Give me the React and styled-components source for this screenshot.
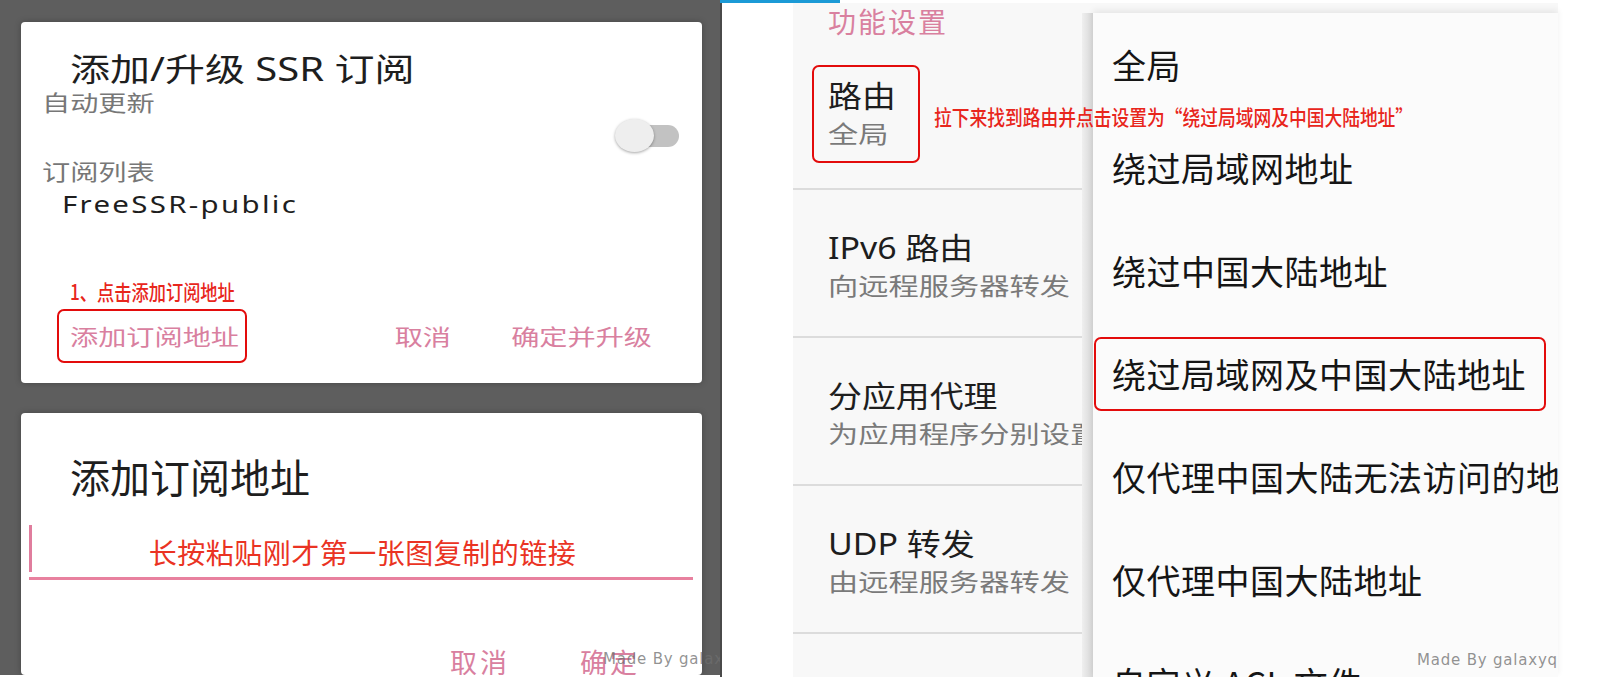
import styled, { createGlobalStyle } from 'styled-components'

const GlobalStyle = createGlobalStyle`
    html, body {
        margin:0;
        padding:0;
        background:#fff;
    }
    body {
        font-family:"Noto Sans", "Noto Sans CJK SC", sans-serif;
    }
`

const PINK = '#d9809f'
const RED = '#e8261c'

const Page = styled.div`
    display:flex;
    align-items:flex-start;
    width:1601px;
    height:684px;
    overflow:hidden;
    background:#fff;
`

/* ---------- left: the two dialogs ---------- */

const LeftPane = styled.div`
    position:relative;
    flex:none;
    width:720px;
    height:675px;
    box-sizing:border-box;
    padding:22px 18px 0 21px;
    background:#5e5e5e;
    display:flex;
    flex-direction:column;
    gap:30px;
    overflow:hidden;
`

const Card = styled.div`
    background:#fff;
    border-radius:4px;
    display:flex;
    flex-direction:column;
    box-shadow:0 0 6px rgba(0,0,0,.25);
    ${p => p.$grow ? 'flex:1;' : `flex:none; height:${p.$h}px;`}
`

// the first dialog was captured stretched sideways
const Wide = styled.div`
    transform:scaleX(${p => p.$sx || 1.28});
    transform-origin:${p => p.$right ? 'right' : 'left'} center;
    white-space:nowrap;
`

const DialogTitle = styled(Wide)`
    margin:27px 0 0 49px;
    font-size:32px;
    line-height:40px;
    color:#1e1e1e;
`

const FieldLabel = styled(Wide)`
    margin-left:21px;
    font-size:22px;
    line-height:26px;
    color:#777;
`

const FieldValue = styled(Wide)`
    margin:5px 0 0 41px;
    font-size:23px;
    line-height:30px;
    letter-spacing:1.8px;
    color:#1e1e1e;
`

const ToggleRow = styled.div`
    display:flex;
    justify-content:flex-end;
    padding-right:23px;
    margin:4px 0 5px;
`

const Track = styled.div`
    position:relative;
    width:62px;
    height:34px;
    &::before {
        content:"";
        position:absolute;
        left:2px;
        right:0;
        top:6px;
        height:22px;
        border-radius:11px;
        background:#c2c2c2;
    }
`

const Thumb = styled.div`
    position:absolute;
    left:-2px;
    top:0;
    width:39px;
    height:33px;
    border-radius:50%;
    background:#eeeeee;
    box-shadow:0 1px 3px rgba(0,0,0,.35);
`

const Spacer = styled.div`
    flex:1;
`

const Note = styled.div`
    font-family:"Noto Sans CJK SC", sans-serif;
    font-size:21px;
    font-weight:500;
    line-height:24px;
    color:${RED};
    white-space:nowrap;
    transform:scaleX(${p => p.$sx || .82});
    transform-origin:left center;
`

const NoteLine = styled(Note)`
    margin-left:49px;
`

const ButtonRow = styled.div`
    display:flex;
    align-items:center;
    margin:6px 0 20px;
    padding:0 50px 0 36px;
`

const Ring = styled.div`
    box-sizing:border-box;
    border:2.5px solid #e30c0c;
    border-radius:7px;
    ${p => p.$w ? `width:${p.$w}px;` : ''}
    ${p => p.$h ? `height:${p.$h}px;` : ''}
    display:flex;
    flex-direction:column;
    justify-content:center;
`

const PinkButton = styled(Wide)`
    font-size:22px;
    line-height:30px;
    color:${PINK};
`

const RightButtons = styled.div`
    margin-left:auto;
    display:flex;
    gap:91px;
`

const BigTitle = styled.div`
    margin:41px 0 0 49px;
    font-size:40px;
    line-height:48px;
    color:#1e1e1e;
    white-space:nowrap;
`

const Field = styled.div`
    display:flex;
    margin:23px 9px 0 8px;
    height:55px;
    box-sizing:border-box;
    border-bottom:3px solid #e8819f;
`

const Caret = styled.div`
    flex:none;
    width:3px;
    height:47px;
    background:#e07d9d;
`

const Hint = styled.div`
    flex:1;
    text-align:center;
    font-family:"Noto Sans CJK SC", sans-serif;
    font-size:28px;
    line-height:54px;
    letter-spacing:.5px;
    color:#ea3323;
    white-space:nowrap;
`

const DialogActions = styled.div`
    display:flex;
    justify-content:flex-end;
    gap:70px;
    margin-top:auto;
    padding:0 62px 0 0;
    height:30px;
    overflow:visible;
`

const Action = styled.div`
    font-size:27px;
    line-height:36px;
    letter-spacing:3px;
    color:${PINK};
    white-space:nowrap;
`

const Watermark = styled.div`
    position:absolute;
    left:${p => p.$x}px;
    top:${p => p.$y}px;
    font-family:"DejaVu Sans", sans-serif;
    font-size:15px;
    letter-spacing:.8px;
    color:rgba(110,110,110,.75);
    white-space:nowrap;
`

/* ---------- right: settings list with popup ---------- */

const RightPane = styled.div`
    position:relative;
    flex:none;
    width:881px;
    height:677px;
    display:flex;
    flex-direction:column;
    overflow:hidden;
`

const TopStrip = styled.div`
    flex:none;
    height:3px;
    background:#fff;
    &::before {
        content:"";
        display:block;
        width:120px;
        height:3px;
        background:#1b9ad6;
    }
`

const Body = styled.div`
    flex:1;
    display:flex;
    min-height:0;
`

const Gutter = styled.div`
    flex:none;
    width:71px;
    border-left:2px solid #4a4a4a;
    background:#fff;
`

const Sheet = styled.div`
    flex:none;
    width:765px;
    display:flex;
    background:#f8f8f8;
`

const List = styled.div`
    flex:none;
    width:289px;
    overflow:hidden;
    display:flex;
    flex-direction:column;
`

const SectionHead = styled.div`
    padding-left:35px;
    font-size:28px;
    line-height:38px;
    letter-spacing:2px;
    color:${PINK};
    white-space:nowrap;
`

const Row = styled.div`
    flex:none;
    box-sizing:border-box;
    height:${p => p.$h || 148}px;
    padding:${p => p.$pad || '39px 0 0 35px'};
    border-bottom:2px solid #dcdcdc;
`

const RowTitle = styled.div`
    font-size:30px;
    line-height:38px;
    color:#1e1e1e;
    white-space:nowrap;
    transform:scaleX(1.13);
    transform-origin:left center;
`

const RowSub = styled.div`
    font-size:24px;
    line-height:38px;
    color:#7a7a7a;
    white-space:nowrap;
    transform:scaleX(1.26);
    transform-origin:left center;
`

const PopupColumn = styled.div`
    flex:none;
    width:476px;
    display:flex;
    padding-top:10px;
`

const PopupShade = styled.div`
    flex:none;
    width:11px;
    background:linear-gradient(to right, #efefef, #d6d6d6);
`

const Popup = styled.div`
    flex:1;
    background:#fbfbfb;
    overflow:hidden;
    box-shadow:0 -3px 6px rgba(0,0,0,.07);
`

const Option = styled.div`
    height:103px;
    display:flex;
    align-items:center;
    padding-left:${p => p.$boxed ? 1 : 19}px;
    font-family:"Noto Sans CJK SC", sans-serif;
    font-size:34px;
    letter-spacing:.5px;
    color:#151515;
    white-space:nowrap;
`

const OptionRing = styled(Ring)`
    padding-left:16px;
`

const Callout = styled(Note)`
    position:absolute;
    left:214px;
    top:104px;
`

const options = [
    '全局',
    '绕过局域网地址',
    '绕过中国大陆地址',
    '绕过局域网及中国大陆地址',
    '仅代理中国大陆无法访问的地址',
    '仅代理中国大陆地址',
    '自定义 ACL 文件',
]

const rows = [
    ['IPv6 路由', '向远程服务器转发'],
    ['分应用代理', '为应用程序分别设置代理'],
    ['UDP 转发', '由远程服务器转发'],
    ['远程 DNS', '8.8.8.8'],
]

const App = () => {
    return <Page>
        <GlobalStyle />

        <LeftPane>
            <Card $h={361}>
                <DialogTitle $sx={1.25}>添加/升级 SSR 订阅</DialogTitle>
                <FieldLabel>自动更新</FieldLabel>
                <ToggleRow>
                    <Track><Thumb /></Track>
                </ToggleRow>
                <FieldLabel>订阅列表</FieldLabel>
                <FieldValue>FreeSSR-public</FieldValue>
                <Spacer />
                <NoteLine>1、点击添加订阅地址</NoteLine>
                <ButtonRow>
                    <Ring $w={190} $h={54}>
                        <PinkButton style={{ marginLeft: 11 }}>添加订阅地址</PinkButton>
                    </Ring>
                    <RightButtons>
                        <PinkButton $right>取消</PinkButton>
                        <PinkButton $right>确定并升级</PinkButton>
                    </RightButtons>
                </ButtonRow>
            </Card>

            <Card $grow>
                <BigTitle>添加订阅地址</BigTitle>
                <Field>
                    <Caret />
                    <Hint>长按粘贴刚才第一张图复制的链接</Hint>
                </Field>
                <DialogActions>
                    <Action>取消</Action>
                    <Action>确定</Action>
                </DialogActions>
            </Card>

            <Watermark $x={603} $y={650}>Made By galaxyq</Watermark>
        </LeftPane>

        <RightPane>
            <TopStrip />
            <Body>
                <Gutter />
                <Sheet>
                    <List>
                        <SectionHead>功能设置</SectionHead>
                        <Row $h={149} $pad="24px 0 0 19px">
                            <Ring $w={108} $h={98} style={{ paddingLeft: 14, paddingTop: 2 }}>
                                <RowTitle>路由</RowTitle>
                                <RowSub>全局</RowSub>
                            </Ring>
                        </Row>
                        {rows.map(([title, sub]) =>
                            <Row key={title}>
                                <RowTitle>{title}</RowTitle>
                                <RowSub>{sub}</RowSub>
                            </Row>
                        )}
                    </List>

                    <PopupColumn>
                        <PopupShade />
                        <Popup>
                            {options.map((label, i) => i === 3
                                ? <Option key={label} $boxed>
                                    <OptionRing $w={452} $h={74}>{label}</OptionRing>
                                </Option>
                                : <Option key={label}>{label}</Option>
                            )}
                        </Popup>
                    </PopupColumn>
                </Sheet>
            </Body>

            <Callout $sx={.845}>拉下来找到路由并点击设置为“绕过局域网及中国大陆地址”</Callout>
            <Watermark $x={697} $y={651}>Made By galaxyq</Watermark>
        </RightPane>
    </Page>
}

export default App
